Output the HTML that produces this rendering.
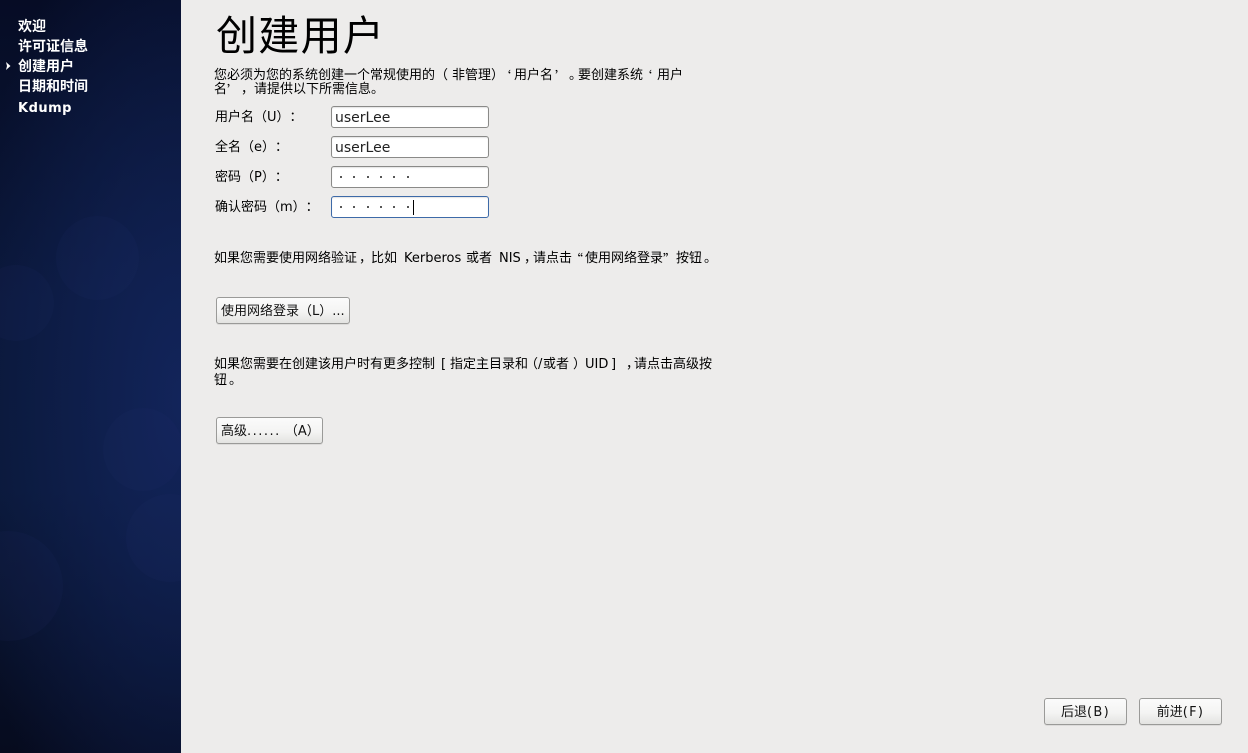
<!DOCTYPE html>
<html lang="zh">
<head>
<meta charset="utf-8">
<title>创建用户</title>
<style>
html,body{margin:0;padding:0;width:1248px;height:753px;overflow:hidden;background:#edeceb;}
body{position:relative;font-family:"DejaVu Sans","WenQuanYi Zen Hei","Noto Sans CJK SC",sans-serif;color:#000;text-spacing-trim:space-all;}
.t{position:absolute;white-space:pre;font-size:13px;line-height:15px;}
.q{font-family:"WenQuanYi Zen Hei","Noto Sans CJK SC",sans-serif;}
#side{position:absolute;left:0;top:0;width:181px;height:753px;overflow:hidden;
background:
radial-gradient(ellipse 220px 520px at 181px 400px,#12245a 0%,rgba(18,36,90,0) 100%),
linear-gradient(180deg,#060c25 0%,#0a1738 40%,#0a1838 65%,#060b1e 100%);}
.c{position:absolute;border-radius:50%;background:rgba(40,60,125,.09);}
.n{position:absolute;left:18px;color:#fff;font-size:14px;line-height:15px;font-weight:bold;white-space:pre;}
.e{position:absolute;left:331px;width:156px;height:20px;border:1px solid #8a8a88;border-radius:3px;background:#fff;font-size:14px;line-height:21px;padding:0;box-shadow:inset 0 1px 1px #e4e4e4;color:#222;}
.e span{position:absolute;left:3px;top:1px;white-space:pre;}
.d{position:absolute;top:9px;width:2px;height:2px;background:#222;border-radius:1px;}
.b{position:absolute;border:1px solid #9a9a98;border-radius:3px;background:linear-gradient(180deg,#fbfbfb 0%,#f4f4f3 55%,#e3e3e1 100%);box-sizing:border-box;font-size:13px;line-height:27px;white-space:pre;color:#111;box-shadow:0 1px 0 #dcdbda;}
</style>
</head>
<body>
<div id="side">
<div class="c" style="left:56px;top:216px;width:83px;height:84px;"></div>
<div class="c" style="left:-22px;top:265px;width:76px;height:76px;"></div>
<div class="c" style="left:103px;top:408px;width:80px;height:83px;"></div>
<div class="c" style="left:126px;top:494px;width:88px;height:88px;"></div>
<div class="c" style="left:-47px;top:531px;width:110px;height:110px;"></div>
<div class="n" style="top:20px">欢迎</div>
<div class="n" style="top:40px">许可证信息</div>
<div class="n" style="top:60px">创建用户</div>
<div class="n" style="top:80px">日期和时间</div>
<div class="n" style="top:101px;font-size:13px;letter-spacing:.5px">Kdump</div>
<svg style="position:absolute;left:5px;top:62px" width="6" height="8" viewBox="0 0 6 8"><path d="M1 0 L5.5 4 L1 8 L2 4 Z" fill="#fff"/></svg>
</div>

<div class="t" style="left:216px;top:11px;font-size:41px;line-height:50px;letter-spacing:1.3px;">创建用户</div>

<div class="t" style="left:214px;top:68px;">您必须为您的系统创建一个常规使用的（</div>
<div class="t" style="left:452px;top:68px;">非管理）</div>
<div class="t q" style="left:498px;top:68px;">‘</div>
<div class="t" style="left:514px;top:68px;">用户名</div>
<div class="t q" style="left:555px;top:68px;">’</div>
<div class="t" style="left:569px;top:68px;">。</div>
<div class="t" style="left:578px;top:68px;">要创建系统</div>
<div class="t q" style="left:639px;top:68px;">‘</div>
<div class="t" style="left:657px;top:68px;">用户</div>
<div class="t" style="left:214px;top:82px;">名</div>
<div class="t q" style="left:227px;top:82px;">’</div>
<div class="t" style="left:241px;top:82px;">，请提供以下所需信息。</div>

<div class="t" style="left:215px;top:110px;">用户名（U）：</div>
<div class="t" style="left:215px;top:140px;">全名（e）：</div>
<div class="t" style="left:215px;top:170px;">密码（P）：</div>
<div class="t" style="left:215px;top:200px;">确认密码（m）：</div>

<div class="e" style="top:106px"><span>userLee</span></div>
<div class="e" style="top:136px"><span>userLee</span></div>
<div class="e" style="top:166px">
<i class="d" style="left:8px"></i><i class="d" style="left:21px"></i><i class="d" style="left:35px"></i><i class="d" style="left:48px"></i><i class="d" style="left:61px"></i><i class="d" style="left:75px"></i>
</div>
<div class="e" style="top:196px;border-color:#3d6aa8;">
<i class="d" style="left:8px"></i><i class="d" style="left:21px"></i><i class="d" style="left:35px"></i><i class="d" style="left:48px"></i><i class="d" style="left:61px"></i><i class="d" style="left:75px"></i>
<i style="position:absolute;left:81px;top:3px;width:1px;height:15px;background:#000"></i>
</div>

<div class="t" style="left:214px;top:251px;">如果您需要使用网络验证</div>
<div class="t" style="left:359px;top:251px;">，</div>
<div class="t" style="left:371px;top:251px;">比如</div>
<div class="t" style="left:404px;top:251px;">Kerberos</div>
<div class="t" style="left:466px;top:251px;">或者</div>
<div class="t" style="left:499px;top:251px;">NIS</div>
<div class="t" style="left:524px;top:251px;">，</div>
<div class="t" style="left:533px;top:251px;">请点击</div>
<div class="t q" style="left:570px;top:251px;">“</div>
<div class="t" style="left:585px;top:251px;">使用网络登录</div>
<div class="t q" style="left:663px;top:251px;">”</div>
<div class="t" style="left:676px;top:251px;">按钮</div>
<div class="t" style="left:704px;top:251px;">。</div>

<div class="b" style="left:216px;top:297px;width:134px;height:27px;padding-left:4px;">使用网络登录（L）...</div>

<div class="t" style="left:214px;top:357px;">如果您需要在创建该用户时有更多控制</div>
<div class="t" style="left:441px;top:357px;">[</div>
<div class="t" style="left:450px;top:357px;">指定主目录和</div>
<div class="t" style="left:525px;top:357px;">（</div>
<div class="t" style="left:538px;top:357px;">/</div>
<div class="t" style="left:543px;top:357px;">或者</div>
<div class="t" style="left:573px;top:357px;">）</div>
<div class="t" style="left:585px;top:357px;">UID</div>
<div class="t" style="left:611px;top:357px;">]</div>
<div class="t" style="left:626px;top:357px;">，</div>
<div class="t" style="left:634px;top:357px;">请点击高级按</div>
<div class="t" style="left:214px;top:373px;">钮</div>
<div class="t" style="left:229px;top:373px;">。</div>

<div class="b" style="left:216px;top:417px;width:107px;height:27px;padding-left:4px;">高级<span style="letter-spacing:1.5px">......</span><span style="margin-left:4px">（A）</span></div>

<div class="b" style="left:1044px;top:698px;width:83px;height:27px;text-align:center;">后退<span style="letter-spacing:1.3px">(B)</span></div>
<div class="b" style="left:1139px;top:698px;width:83px;height:27px;text-align:center;">前进<span style="letter-spacing:1.3px">(F)</span></div>
</body>
</html>
